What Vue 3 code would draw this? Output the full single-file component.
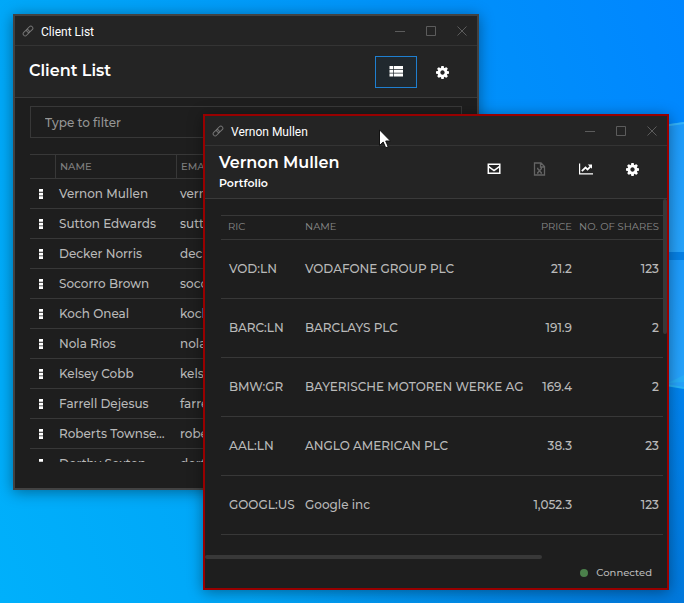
<script setup>
import { ref } from 'vue'

const filter = ref('')

const clients = [
  ['Vernon Mullen', 'vernonmullen@mail.com'],
  ['Sutton Edwards', 'suttonedwards@mail.com'],
  ['Decker Norris', 'deckernorris@mail.com'],
  ['Socorro Brown', 'socorrobrown@mail.com'],
  ['Koch Oneal', 'kochoneal@mail.com'],
  ['Nola Rios', 'nolarios@mail.com'],
  ['Kelsey Cobb', 'kelseycobb@mail.com'],
  ['Farrell Dejesus', 'farrelldejesus@mail.com'],
  ['Roberts Townsend', 'robertstownsend@mail.com'],
  ['Dorthy Sexton', 'dorthysexton@mail.com']
]

const holdings = [
  ['VOD:LN', 'VODAFONE GROUP PLC', '21.2', '123'],
  ['BARC:LN', 'BARCLAYS PLC', '191.9', '2'],
  ['BMW:GR', 'BAYERISCHE MOTOREN WERKE AG', '169.4', '2'],
  ['AAL:LN', 'ANGLO AMERICAN PLC', '38.3', '23'],
  ['GOOGL:US', 'Google inc', '1,052.3', '123']
]

const windowButtons = [
  ['Minimize', 'M0 5.5H10'],
  ['Maximize', 'M0.5 0.5H9.5V9.5H0.5Z'],
  ['Close', 'M0.5 0.5L9.5 9.5M9.5 0.5L0.5 9.5']
]

const gearPath = 'M1024 896q0-106-75-181t-181-75-181 75-75 181 75 181 181 75 181-75 75-181zm512-109v222q0 12-8 23t-20 13l-185 28q-19 54-39 91 35 50 107 138 10 12 10 25t-9 23q-27 37-99 108t-94 71q-12 0-26-9l-138-108q-44 23-91 38-16 136-29 186-7 28-36 28h-222q-14 0-24.5-8.5t-11.5-21.5l-28-184q-49-16-90-37l-141 107q-10 9-25 9-14 0-25-11-126-114-165-168-7-10-7-23 0-12 8-23 15-21 51-66.5t54-70.5q-27-50-41-99l-183-27q-13-2-21-12.5t-8-23.5v-222q0-12 8-23t19-13l186-28q14-46 39-92-40-57-107-138-10-12-10-24 0-10 9-23 26-36 98.5-107.5t94.5-71.5q13 0 26 10l138 107q44-23 91-38 16-136 29-186 7-28 36-28h222q14 0 24.5 8.5t11.5 21.5l28 184q49 16 90 37l142-107q9-9 24-9 13 0 25 10 129 119 165 170 7 8 7 22 0 12-8 23-15 21-51 66.5t-54 70.5q26 50 41 98l183 28q13 2 21 12.5t8 23.5z'
</script>

<template>
  <main class="desktop">
    <svg class="wallpaper" viewBox="0 0 684 603" preserveAspectRatio="none" aria-hidden="true">
      <defs>
        <linearGradient id="pane" x1="0" y1="0" x2="1" y2="1">
          <stop offset="0" stop-color="#1594fb" />
          <stop offset="1" stop-color="#27a3fb" />
        </linearGradient>
      </defs>
      <path d="M600 134L684 122V252H600Z" fill="url(#pane)" />
      <path d="M600 135L684 123" stroke="#35b4fa" stroke-width="2" />
      <path d="M600 260H684V388L600 374Z" fill="url(#pane)" />
      <path d="M600 252H684V260H600Z" fill="#0681e6" />
      <path d="M668 383L684 375V382Z" fill="#27aef9" />
      <path d="M660 384L684 388" stroke="#27b4f9" stroke-width="2" />
    </svg>

    <section class="window clients" aria-label="Client List">
      <div class="titlebar">
        <svg class="link" viewBox="0 0 12 12" aria-hidden="true">
          <g transform="rotate(-45 6 6)"><rect x="0" y="4" width="7" height="4" rx="2" /><rect x="5" y="4" width="7" height="4" rx="2" /></g>
        </svg>
        <span class="caption">Client List</span>
        <button v-for="b in windowButtons" :key="b[0]" class="winbtn" :aria-label="b[0]">
          <svg viewBox="0 0 10 10"><path :d="b[1]" /></svg>
        </button>
      </div>
      <header class="head">
        <h1>Client List</h1>
        <nav class="tools">
          <button class="tool active" aria-label="List view">
            <svg viewBox="0 0 14 14"><path d="M0.500 1h3.500v3H0.500zM4.700 1H14v3H4.700zM0.500 4.700h3.500v3H0.500zM4.700 4.700H14v3H4.700zM0.500 8.400h3.500v3H0.500zM4.700 8.400H14v3H4.700z" /></svg>
          </button>
          <button class="tool" aria-label="Settings">
            <svg class="gear" viewBox="0 128 1536 1536"><path :d="gearPath" /></svg>
          </button>
        </nav>
      </header>
      <div class="content">
        <input v-model="filter" class="filter" type="text" placeholder="Type to filter" aria-label="Type to filter" />
        <div class="scroller">
          <table class="grid client-grid">
            <thead>
              <tr><th class="menu-col"></th><th class="name-col">NAME</th><th>EMAIL</th></tr>
            </thead>
            <tbody>
              <tr v-for="c in clients" :key="c[0]">
                <td class="menu-cell">
                  <button class="dots" aria-label="Row menu">
                    <svg viewBox="0 0 4 10"><path d="M0 0h4v2.700H0zM0 3.700h4v2.700H0zM0 7.300h4V10H0z" /></svg>
                  </button>
                </td>
                <td>{{ c[0] }}</td>
                <td>{{ c[1] }}</td>
              </tr>
            </tbody>
          </table>
        </div>
      </div>
    </section>

    <section class="window portfolio" aria-label="Vernon Mullen">
      <div class="titlebar">
        <svg class="link" viewBox="0 0 12 12" aria-hidden="true">
          <g transform="rotate(-45 6 6)"><rect x="0" y="4" width="7" height="4" rx="2" /><rect x="5" y="4" width="7" height="4" rx="2" /></g>
        </svg>
        <span class="caption">Vernon Mullen</span>
        <button v-for="b in windowButtons" :key="b[0]" class="winbtn" :aria-label="b[0]">
          <svg viewBox="0 0 10 10"><path :d="b[1]" /></svg>
        </button>
      </div>
      <header class="head">
        <div>
          <h1>Vernon Mullen</h1>
          <h2>Portfolio</h2>
        </div>
        <nav class="tools">
          <button class="tool" aria-label="Mail">
            <svg viewBox="0 0 14 14"><path class="line" d="M1.300 2.200h11.500v9h-11.500zM1.300 4.400L7 8.500L12.700 4.400" /></svg>
          </button>
          <button class="tool" aria-label="Export to Excel" disabled>
            <svg viewBox="0 0 14 14"><path class="line" d="M1.500 1H8L11.500 4.500V13H1.500ZM7.500 1V5H11.500M4.500 6.500L8.500 11M8.500 6.500L4.500 11M4 6.500H5.500M7.500 6.500H9M4 11H5.500M7.500 11H9" /></svg>
          </button>
          <button class="tool" aria-label="Chart">
            <svg viewBox="0 0 14 14"><path d="M0 1.500H1.200V11.300H14V12.500H0ZM8.800 2.500H13V6.700L11.800 5.500L8.500 8.800L6.500 6.800L3.500 9.800L2.200 8.500L6.500 4.200L8.500 6.200L10.500 4.200Z" /></svg>
          </button>
          <button class="tool" aria-label="Settings">
            <svg class="gear" viewBox="0 128 1536 1536"><path :d="gearPath" /></svg>
          </button>
        </nav>
      </header>
      <div class="content">
        <table class="grid holding-grid">
          <thead>
            <tr>
              <th class="ric-col">RIC</th>
              <th>NAME</th>
              <th class="price-col num">PRICE</th>
              <th class="shares-col num">NO. OF SHARES</th>
            </tr>
          </thead>
          <tbody>
            <tr v-for="h in holdings" :key="h[0]">
              <td>{{ h[0] }}</td>
              <td>{{ h[1] }}</td>
              <td class="num">{{ h[2] }}</td>
              <td class="num">{{ h[3] }}</td>
            </tr>
          </tbody>
        </table>
        <div class="vtrack"><div class="vthumb"></div></div>
      </div>
      <div class="htrack"><div class="hthumb"></div></div>
      <footer class="status"><span class="led"></span>Connected</footer>
    </section>

    <svg class="cursor" viewBox="0 0 12 20" aria-hidden="true">
      <path d="M0.500 0.800V16.500L4.200 13L6.700 18.800L9.200 17.700L6.700 12H11.500Z" />
    </svg>
  </main>
</template>

<style>
body {
  background: #0093f8;
}
</style>

<style scoped>
.desktop {
  position: relative;
  min-height: 100vh;
  overflow: hidden;
  background:
    radial-gradient(ellipse at 100% 100%, rgba(0, 105, 200, 0.6) 0%, transparent 45%),
    linear-gradient(70deg, #00b0fb 0%, #00a6f8 30%, #0092f9 68%, #0086ff 100%);
  font-family: Montserrat, Inter, "Liberation Sans", sans-serif;
  font-weight: 500;
  color: #b9b9b9;
}
.wallpaper {
  position: absolute;
  width: 100%;
  height: 100%;
}
.window {
  position: absolute;
  box-sizing: border-box;
  display: flex;
  flex-direction: column;
  overflow: hidden;
  background: #1e1e1e;
  border: 2px solid #424242;
  box-shadow: 0 2px 14px rgba(0, 0, 0, 0.4);
}
.clients {
  inset: 14px 205px 113px 13px;
}
.portfolio {
  inset: 114px 15px 13px 203px;
  border-color: #980000;
}
.titlebar {
  display: flex;
  align-items: center;
  flex: none;
  height: 29px;
  padding-left: 7px;
  background: #242424;
  border-bottom: 1px solid #343434;
}
.link {
  width: 12px;
  height: 12px;
  fill: none;
  stroke: #757575;
}
.caption {
  flex: 1;
  padding: 2px 0 0 7px;
  font: 12px/16px Roboto, sans-serif;
  color: #fff;
}
button {
  display: flex;
  align-items: center;
  justify-content: center;
  padding: 0;
  border: 0;
  background: none;
}
.winbtn {
  width: 31px;
  height: 29px;
}
.winbtn svg {
  width: 10px;
  height: 10px;
  fill: none;
  stroke: #5c5c5c;
}
.head {
  box-sizing: border-box;
  display: flex;
  flex: none;
  justify-content: space-between;
  height: 52px;
  padding: 7px 14px 0;
  background: #242424;
  border-bottom: 1px solid #3a3a3a;
}
.portfolio .head {
  height: 53px;
}
.clients .head {
  padding-top: 10px;
}
h1,
h2 {
  margin: 0;
  color: #fff;
}
h1 {
  font-size: 16px;
  line-height: 20px;
  font-weight: 600;
}
.clients h1 {
  padding-top: 5px;
}
h2 {
  font-size: 11px;
  line-height: 20px;
  font-weight: 600;
}
.tools {
  display: flex;
  align-items: flex-start;
  gap: 4px;
}
.tool {
  box-sizing: border-box;
  width: 42px;
  height: 32px;
}
.active {
  background: #20282e;
  border: 1px solid #1f7fd0;
}
.tool svg {
  width: 14px;
  height: 14px;
  fill: #fff;
}
.tool .gear {
  width: 13px;
  height: 13px;
}
.tool .line {
  fill: none;
  stroke: #fff;
  stroke-width: 1.5;
}
.tool:disabled .line {
  stroke: #646464;
  stroke-width: 1.3;
}
.content {
  position: relative;
  flex: 1;
  min-height: 0;
  overflow: hidden;
}
.clients .content {
  display: flex;
  flex-direction: column;
  padding: 8px 15px 26px;
}
.filter {
  box-sizing: border-box;
  flex: none;
  width: 100%;
  height: 32px;
  padding: 0 14px;
  border: 1px solid #383838;
  background: #1e1e1e;
  color: #b9b9b9;
  font: inherit;
  font-size: 12px;
}
.filter::placeholder {
  color: #969696;
}
.scroller {
  flex: 1;
  margin-top: 16px;
  overflow: hidden;
}
.grid {
  width: 100%;
  border-collapse: separate;
  border-spacing: 0;
  table-layout: fixed;
  font-size: 12px;
}
th,
td {
  box-sizing: border-box;
  padding: 0 4px;
  overflow: hidden;
  text-align: left;
  text-overflow: ellipsis;
  white-space: nowrap;
  font-weight: 500;
  border-bottom: 1px solid #383838;
}
th {
  height: 25px;
  border-top: 1px solid #383838;
  font-size: 10px;
  color: #7e7e7e;
}
.client-grid th + th {
  border-left: 1px solid #383838;
}
.client-grid td {
  height: 30px;
}
.menu-col {
  width: 25px;
}
.name-col {
  width: 121px;
}
.client-grid .menu-cell {
  padding: 0 9px;
}
.dots svg {
  width: 4px;
  height: 10px;
  fill: #fff;
}
.holding-grid {
  width: calc(100% - 20px);
  margin: 16px 4px 0 16px;
}
.holding-grid td {
  height: 59px;
}
.holding-grid th,
.holding-grid td {
  padding: 0 0 2px 8px;
}
.holding-grid th {
  font-weight: 400;
  color: #8a8a8a;
}
.holding-grid .ric-col {
  padding-left: 7px;
}
.ric-col {
  width: 76px;
}
.price-col {
  width: 48px;
}
.shares-col {
  width: 87px;
}
.grid .num {
  padding-left: 0;
  padding-right: 4px;
  text-align: right;
}
.vtrack {
  position: absolute;
  inset: 0 0 0 auto;
  width: 4px;
}
.vthumb {
  height: 38%;
  border-radius: 2px;
  background: #383838;
}
.htrack {
  flex: none;
  height: 4px;
}
.hthumb {
  width: 73%;
  height: 4px;
  border-radius: 2px;
  background: #383838;
}
.status {
  display: flex;
  flex: none;
  align-items: center;
  justify-content: flex-end;
  gap: 8px;
  height: 29px;
  padding: 0 15px 2px 0;
  box-sizing: border-box;
  font-size: 10px;
}
.led {
  width: 8px;
  height: 8px;
  border-radius: 50%;
  background: #4b804b;
}
.cursor {
  position: absolute;
  left: 379px;
  top: 129px;
  width: 12px;
  height: 20px;
  fill: #fff;
  stroke: #111;
}
</style>
